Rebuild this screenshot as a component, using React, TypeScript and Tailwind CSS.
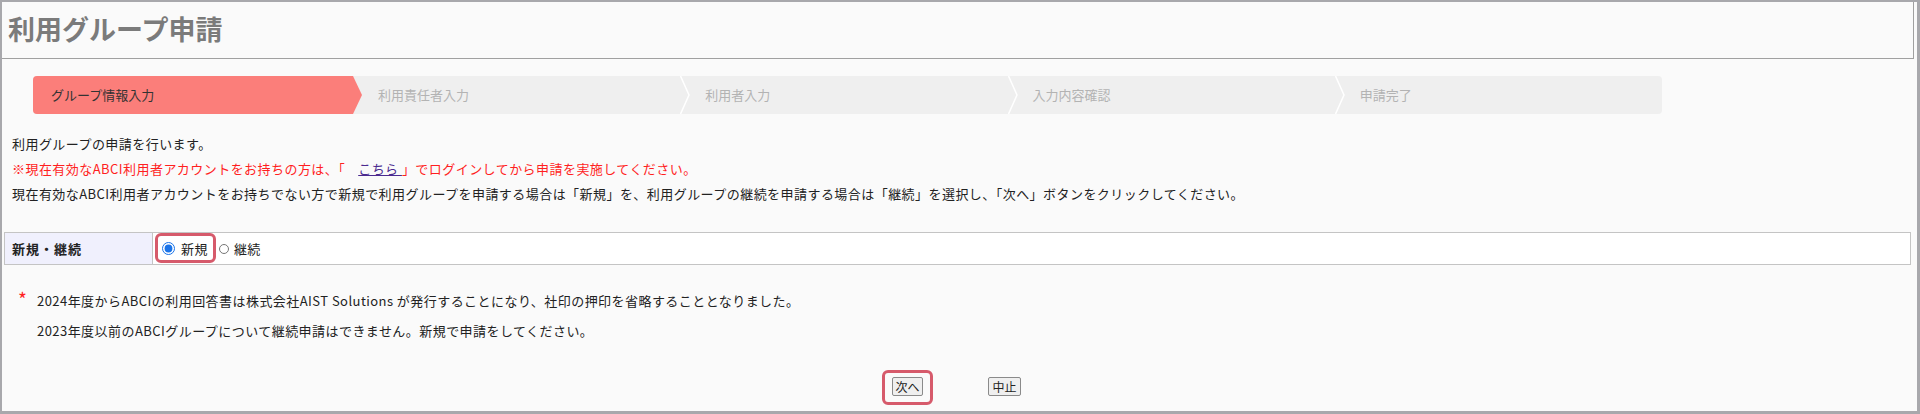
import React from "react";

const font = { fontFamily: "'Noto Sans CJK JP', 'Noto Sans', sans-serif" };

function Chevron({ red }: { red?: boolean }) {
  return (
    <svg
      className="absolute left-full top-0 z-10"
      width="11"
      height="38"
      viewBox="0 0 11 38"
    >
      {red ? (
        <polygon points="0,0 9,19 0,38" fill="#fb7e7a" />
      ) : (
        <polyline points="0.5,0 9,19 0.5,38" fill="none" stroke="#ffffff" strokeWidth="1.5" />
      )}
    </svg>
  );
}

export default function App() {
  const steps = ["利用責任者入力", "利用者入力", "入力内容確認", "申請完了"];
  return (
    <div
      className="h-[414px] w-[1920px] overflow-hidden border-t-2 border-l-2 border-r-[3px] border-b-[3px] border-[#a8a8ac] bg-[#fafafa] text-[13px] text-[#222]"
      style={font}
    >
      {/* header */}
      <div className="flex h-[57px] w-[1912px] items-center border-b border-r border-[#a0a0a0] bg-[#fafafa] pl-[6px] pb-[3px]">
        <h1 className="text-[27px] font-bold leading-none text-[#7b7b7b]">利用グループ申請</h1>
      </div>

      {/* step bar */}
      <div className="ml-[31px] mt-[17px] flex h-[38px] w-[1629px] rounded-[4px] bg-[#efefef] text-[13px]">
        <div className="relative flex w-[320px] items-center rounded-l-[4px] bg-[#fb7e7a] pl-[18px] text-[#333]">
          グループ情報入力
          <Chevron red />
        </div>
        {steps.map((s, i) => (
          <div key={s} className="relative flex flex-1 items-center pl-[25px] text-[#b3b3b3]">
            {s}
            {i < steps.length - 1 && <Chevron />}
          </div>
        ))}
      </div>

      {/* intro text */}
      <div className="ml-[10px] mt-[17px] leading-[25px] tracking-[0.45px]">
        <p>利用グループの申請を行います。</p>
        <p className="text-[#ff1f1f]">
          ※現在有効なABCI利用者アカウントをお持ちの方は、「
          <a href="#" className="ml-[13px] text-[#4b2a8f] underline">
            こちら&nbsp;
          </a>
          」でログインしてから申請を実施してください。
        </p>
        <p>
          現在有効なABCI利用者アカウントをお持ちでない方で新規で利用グループを申請する場合は「新規」を、利用グループの継続を申請する場合は「継続」を選択し、「次へ」ボタンをクリックしてください。
        </p>
      </div>

      {/* table */}
      <div className="ml-[2px] mt-[26px] flex h-[33px] w-[1907px] border border-[#c4c4c4] bg-white tracking-[0.45px]">
        <div className="flex w-[148px] items-center border-r border-[#c4c4c4] bg-[#f0f0fd] pl-[7px] font-bold tracking-[1px]">
          新規・継続
        </div>
        <div className="flex items-center pl-[9px]">
          <span className="relative flex items-center">
            <span className="pointer-events-none absolute -left-[7px] -right-[8px] -top-[6px] -bottom-[5px] rounded-[6px] border-[3px] border-[#d65a6b]" />
            <input type="radio" name="kind" defaultChecked className="m-0 h-[13px] w-[13px] accent-[#1a73e8]" />
            <span className="ml-[6px]">新規</span>
          </span>
          <input type="radio" name="kind" className="ml-[11px] m-0 h-[10px] w-[10px]" />
          <span className="ml-[5px]">継続</span>
        </div>
      </div>

      {/* notes */}
      <div className="mt-[21px] leading-[30px] tracking-[0.45px]">
        <p className="flex">
          <span className="ml-[16px] w-[19px] text-[19px] leading-[26px] text-[#ff1f1f]">*</span>
          <span>2024年度からABCIの利用回答書は株式会社AIST Solutions が発行することになり、社印の押印を省略することとなりました。</span>
        </p>
        <p className="ml-[35px]">2023年度以前のABCIグループについて継続申請はできません。新規で申請をしてください。</p>
      </div>

      {/* buttons */}
      <div className="mt-[31px] flex justify-center gap-[65px] pr-[6px]">
        <span className="relative flex">
          <span className="pointer-events-none absolute -left-[10px] -right-[10px] -top-[7px] -bottom-[9px] rounded-[6px] border-[3px] border-[#d65a6b]" />
          <button className="flex h-[19px] w-[31px] items-center justify-center rounded-[2px] border border-[#8a8a8a] bg-[#efefef] text-[12px] leading-none text-[#222]">
            次へ
          </button>
        </span>
        <button className="flex h-[19px] w-[33px] items-center justify-center rounded-[2px] border border-[#8a8a8a] bg-[#efefef] text-[12px] leading-none text-[#222]">
          中止
        </button>
      </div>
    </div>
  );
}
